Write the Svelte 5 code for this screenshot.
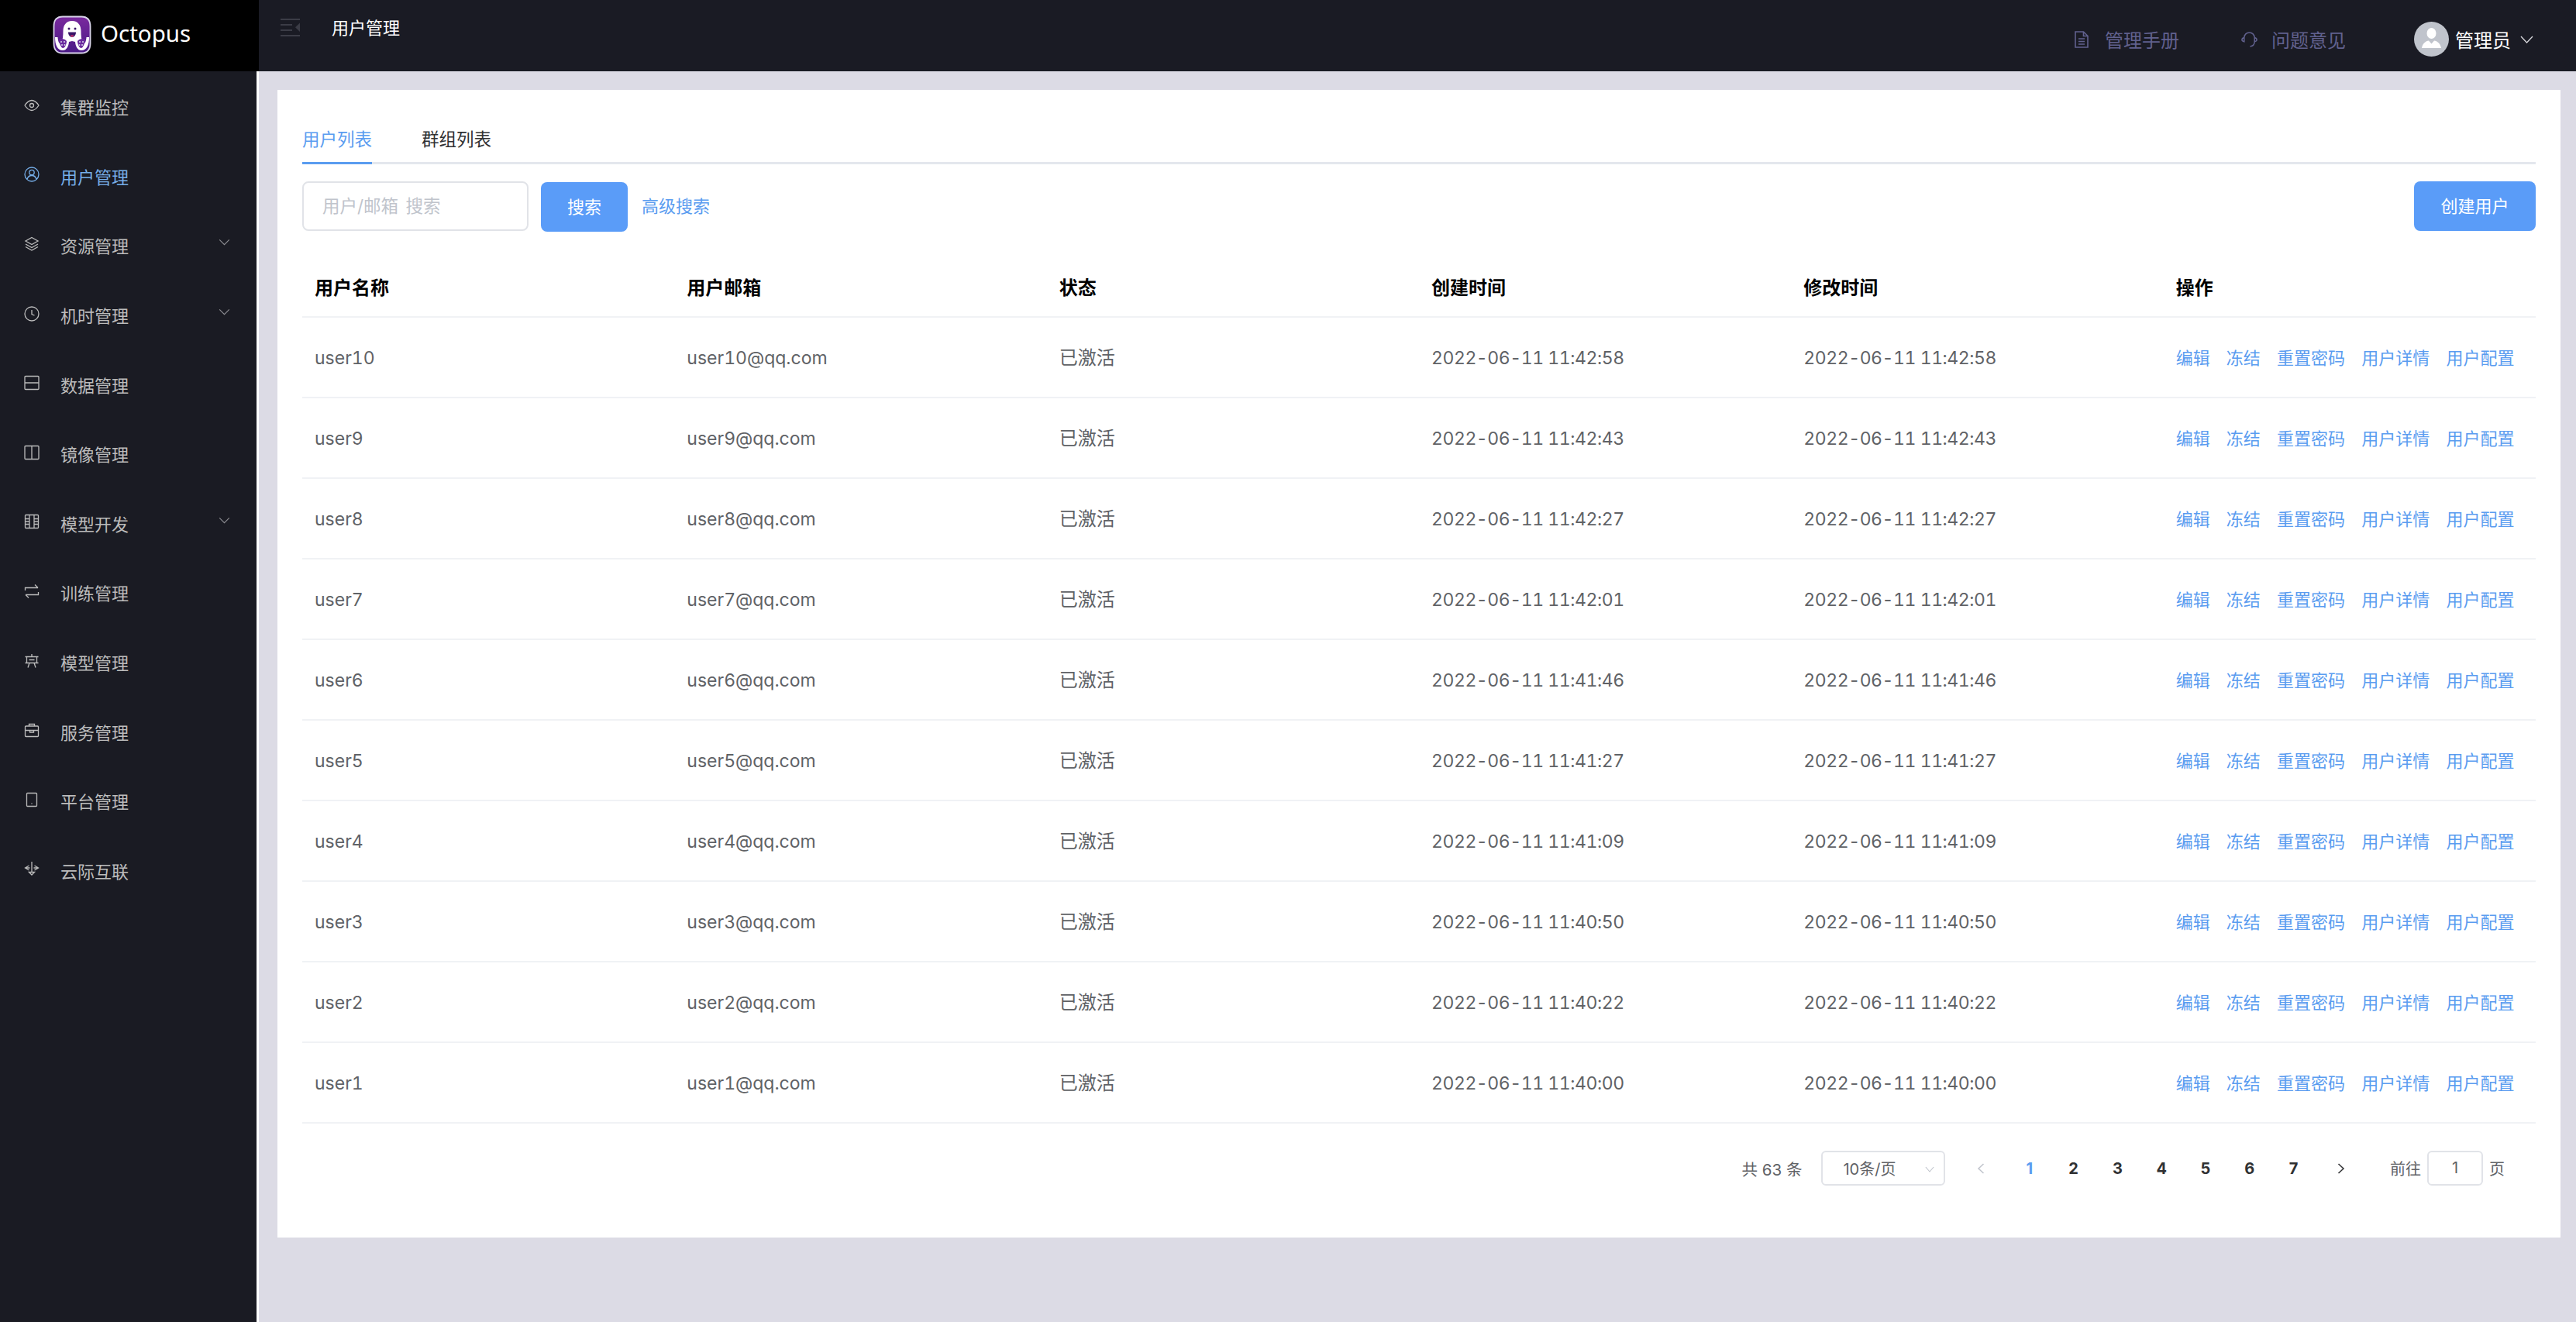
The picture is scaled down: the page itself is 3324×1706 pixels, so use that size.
<script>
  const menu = [
    { t: '集群监控', d: 'M1 10C4 5.5 7 3.5 10 3.5S16 5.5 19 10C16 14.5 13 16.5 10 16.5S4 14.5 1 10ZM12.5 10a2.5 2.5 0 1 1-5 0a2.5 2.5 0 1 1 5 0Z' },
    { t: '用户管理', active: true, d: 'M19 10a9 9 0 1 1-18 0a9 9 0 1 1 18 0ZM13.2 7.5a3.2 3.2 0 1 1-6.4 0a3.2 3.2 0 1 1 6.4 0ZM4 16.5c.8-3 3.3-5 6-5s5.200 2 6 5' },
    { t: '资源管理', arrow: true, d: 'M10 1.500 18 6l-8 4.500L2 6ZM2 10l8 4.500L18 10M2 13.500 10 18l8-4.500' },
    { t: '机时管理', arrow: true, d: 'M19 10a9 9 0 1 1-18 0a9 9 0 1 1 18 0ZM10 5v5.500l3.500 1.500' },
    { t: '数据管理', d: 'M2 1.500h16a1 1 0 0 1 1 1v15a1 1 0 0 1-1 1H2a1 1 0 0 1-1-1v-15a1 1 0 0 1 1-1ZM1 10h18' },
    { t: '镜像管理', d: 'M2 1.500h16a1 1 0 0 1 1 1v15a1 1 0 0 1-1 1H2a1 1 0 0 1-1-1v-15a1 1 0 0 1 1-1ZM10 1.500v17' },
    { t: '模型开发', arrow: true, d: 'M2.500 1.500h15a1 1 0 0 1 1 1v15a1 1 0 0 1-1 1h-15a1 1 0 0 1-1-1v-15a1 1 0 0 1 1-1ZM7 1.500v17M13 1.500v17M1.500 6.500H7M1.500 10H7M1.500 13.500H7M13 6.500h5.500M13 10h5.500M13 13.500h5.500' },
    { t: '训练管理', d: 'M1.500 9V5.500H18M14 1.500l4 4M18.500 11v3.500H2M6 18.500l-4-4' },
    { t: '模型管理', d: 'M1.500 4.500h17M3.500 4.500v8h13v-8M10 1v3.500M6.500 8.500h7M1.500 12.500h17M7 12.500 5 18.500M13 12.500l2 6' },
    { t: '服务管理', d: 'M2.500 5h15a1 1 0 0 1 1 1v11.500a1 1 0 0 1-1 1h-15a1 1 0 0 1-1-1V6a1 1 0 0 1 1-1ZM6.500 5V2.500h7V5M1.500 10.500h17M7.500 10.500v2.500h5v-2.500' },
    { t: '平台管理', d: 'M4.500 1.500h11a1 1 0 0 1 1 1v15a1 1 0 0 1-1 1h-11a1 1 0 0 1-1-1v-15a1 1 0 0 1 1-1ZM9.500 15h1' },
    { t: '云际互联', d: 'M10 1v14M6.500 6 1.500 9l5 3M13.500 6l5 3-5 3M1.500 9h6M12.500 9h6M6.500 14.500 10 18l3.500-3.500Z' }
  ];
  const users = [
    ['user10', '2022-06-11 11:42:58'],
    ['user9', '2022-06-11 11:42:43'],
    ['user8', '2022-06-11 11:42:27'],
    ['user7', '2022-06-11 11:42:01'],
    ['user6', '2022-06-11 11:41:46'],
    ['user5', '2022-06-11 11:41:27'],
    ['user4', '2022-06-11 11:41:09'],
    ['user3', '2022-06-11 11:40:50'],
    ['user2', '2022-06-11 11:40:22'],
    ['user1', '2022-06-11 11:40:00']
  ];
  const cols = ['用户名称', '用户邮箱', '状态', '创建时间', '修改时间', '操作'];
  const actions = ['编辑', '冻结', '重置密码', '用户详情', '用户配置'];
  const pages = [1, 2, 3, 4, 5, 6, 7];
</script>

<div class="app">
  <aside class="side">
    <div class="brand">
      <svg class="logo" viewBox="0 0 50 50" aria-hidden="true">
        <defs>
          <linearGradient id="lg" x1="0" y1="0" x2="0" y2="1">
            <stop offset="0" stop-color="#7a2a9e" />
            <stop offset="1" stop-color="#4a1a86" />
          </linearGradient>
        </defs>
        <path d="M13 1.500H37C45 1.500 48.500 6 48.500 14V36C48.500 44 45 48.500 37 48.500H13C5 48.500 1.500 44 1.500 36V14C1.500 6 5 1.500 13 1.500Z" fill="url(#lg)" stroke="#d9d4ea" stroke-width="1.800" />
        <path d="M25 7C33 7 36.500 13 36.500 20C36.500 26 37 31 38.500 34.500C40 38 43 36 43.500 28H47C47 38 44 45 37 45C32 45 29.500 40 29 34L25 33L21 34C20.500 40 18 45 13 45C6 45 3 38 3 28H6.500C7 36 10 38 11.500 34.500C13 31 13.500 26 13.500 20C13.500 13 17 7 25 7Z" fill="#fff" />
        <path d="M8 31C9 39 12 42 13 42C16 42 18 37 18 33C16 30 10 29 8 31ZM42 31C41 39 38 42 37 42C34 42 32 37 32 33C34 30 40 29 42 31Z" fill="#6a2a9e" />
        <circle cx="21" cy="17" r="1.500" fill="#3a1668" />
        <circle cx="29" cy="17" r="1.500" fill="#3a1668" />
        <path d="M20 21.500H30C30 25 28 28 25 28S20 25 20 21.500Z" fill="#3a1668" />
        <path d="M22.500 25.500H27.500L25 28Z" fill="#e03a6a" />
        <g fill="#d9d4ea">
          <circle cx="11" cy="34" r="1" /><circle cx="15" cy="34" r="1" /><circle cx="12" cy="38" r="1" /><circle cx="15.500" cy="38" r="1" />
          <circle cx="35" cy="34" r="1" /><circle cx="39" cy="34" r="1" /><circle cx="34.500" cy="38" r="1" /><circle cx="38" cy="38" r="1" />
        </g>
      </svg>
      <span class="brand-name">Octopus</span>
    </div>
    <nav class="menu">
      {#each menu as m}
        <div class="item" class:active={m.active}>
          <svg class="ico" viewBox="0 0 20 20" aria-hidden="true"><path d={m.d} /></svg>
          <span class="label">{m.t}</span>
          {#if m.arrow}
            <svg class="chev" viewBox="0 0 16 10" aria-hidden="true"><path d="M1 1.500 8 8.500 15 1.500" /></svg>
          {/if}
        </div>
      {/each}
    </nav>
  </aside>

  <div class="main">
    <header class="top">
      <svg class="burger" viewBox="0 0 25 23" aria-hidden="true">
        <path d="M0 1h25M0 8h15M0 15h15M0 22h25" />
        <path class="tri" d="M25 5.500V17l-6-5.750Z" />
      </svg>
      <div class="crumb">用户管理</div>
      <div class="spacer"></div>
      <div class="link">
        <svg class="link-ico" viewBox="0 0 18 22" aria-hidden="true"><path d="M1 1h10.500L17 6.500V21H1ZM11.500 1v5.500H17M5 10h8M5 13.500h8M5 17h8" /></svg>
        <span>管理手册</span>
      </div>
      <div class="link second">
        <svg class="link-ico head" viewBox="0 0 22 22" aria-hidden="true"><path d="M4 14V8.500a7 7 0 0 1 14 0V14M4 8.500C2 9 1 10 1 11.250S2 13.500 4 14ZM18 8.500c2 .5 3 1.500 3 2.750S20 13.500 18 14ZM18 14c0 3.500-2.500 6-6 6.500" /></svg>
        <span>问题意见</span>
      </div>
      <div class="avatar">
        <svg viewBox="0 0 45 45" aria-hidden="true">
          <circle cx="22.500" cy="22.500" r="22.500" fill="#c0c4cc" />
          <ellipse cx="22.500" cy="15" rx="6" ry="7" fill="#fff" />
          <path d="M10 34C11 28 15 25 19 24.500L22.500 28.500L26 24.500C30 25 34 28 35 34Z" fill="#fff" />
        </svg>
      </div>
      <span class="who">管理员</span>
      <svg class="who-chev" viewBox="0 0 17 10" aria-hidden="true"><path d="M1 1 8.500 9 16 1" /></svg>
    </header>

    <main class="content">
      <section class="card">
        <div class="tabs">
          <div class="tab on">用户列表</div>
          <div class="tab">群组列表</div>
        </div>
        <div class="tools">
          <div class="input"><span>用户/邮箱 搜索</span></div>
          <button class="btn search"><span>搜索</span></button>
          <span class="adv">高级搜索</span>
          <div class="spacer"></div>
          <button class="btn create"><span>创建用户</span></button>
        </div>
        <div class="table">
          <div class="row head-row">
            {#each cols as c}<div class="cell">{c}</div>{/each}
          </div>
          {#each users as u}
            <div class="row">
              <div class="cell">{u[0]}</div>
              <div class="cell">{u[0]}@qq.com</div>
              <div class="cell status">已激活</div>
              <div class="cell time">{u[1]}</div>
              <div class="cell time">{u[1]}</div>
              <div class="cell acts">
                {#each actions as a}<span>{a}</span>{/each}
              </div>
            </div>
          {/each}
        </div>
        <div class="pager">
          <span class="total">共 63 条</span>
          <div class="select">
            <span>10条/页</span>
            <svg class="sel-chev" viewBox="0 0 14 9" aria-hidden="true"><path d="M1 1 7 8 13 1" /></svg>
          </div>
          <div class="nav prev"><svg viewBox="0 0 10 14" aria-hidden="true"><path d="M8.500 1 2 7 8.500 13" /></svg></div>
          {#each pages as p}
            <div class="num" class:cur={p === 1}>{p}</div>
          {/each}
          <div class="nav next"><svg viewBox="0 0 10 14" aria-hidden="true"><path d="M1.500 1 8 7 1.500 13" /></svg></div>
          <span class="goto">前往</span>
          <div class="jump">1</div>
          <span class="unit">页</span>
        </div>
      </section>
    </main>
  </div>
</div>

<style>
  :global(body) {
    margin: 0;
    background: #dcdbe5;
  }
  .app {
    display: flex;
    width: 3324px;
    height: 1706px;
    overflow: hidden;
    font-family: Inter, "Noto Sans CJK SC", sans-serif;
    font-size: 22px;
    color: #606266;
    background: #dcdbe5;
  }
  .side {
    width: 334px;
    flex: none;
    display: flex;
    flex-direction: column;
    background: #fff;
  }
  .brand {
    height: 92px;
    background: #000;
    display: flex;
    align-items: center;
    padding-left: 68px;
    gap: 12px;
    flex: none;
  }
  .logo {
    width: 50px;
    height: 50px;
    margin-top: -3px;
  }
  .brand-name {
    font-family: "Noto Sans", sans-serif;
    font-size: 29.5px;
    color: #fff;
    margin-top: -7px;
  }
  .menu {
    flex: 1;
    width: 331px;
    background: #1a1b23;
    box-sizing: border-box;
    font-family: "Noto Sans CJK SC", sans-serif;
  }
  .item {
    height: 89.6px;
    display: flex;
    align-items: center;
    padding-left: 31px;
    color: #bcbcbc;
    position: relative;
  }
  .item.active {
    color: #76aee8;
  }
  .ico {
    width: 20px;
    height: 20px;
    margin-right: 27px;
    margin-top: -2px;
    fill: none;
    stroke: currentColor;
    stroke-width: 1.300;
  }
  .label {
    line-height: 30px;
    margin-top: 1px;
  }
  .chev {
    position: absolute;
    left: 282px;
    top: 37px;
    width: 15px;
    height: 9px;
    fill: none;
    stroke: #8d8d92;
    stroke-width: 1.300;
  }
  .main {
    flex: 1;
    min-width: 0;
    display: flex;
    flex-direction: column;
  }
  .top {
    height: 92px;
    flex: none;
    background: #1a1b24;
    display: flex;
    align-items: center;
    padding-left: 28px;
    padding-right: 55px;
    font-family: "Noto Sans CJK SC", sans-serif;
  }
  .burger {
    width: 25px;
    height: 23px;
    margin-top: -22px;
    fill: none;
    stroke: #3b3c46;
    stroke-width: 2;
  }
  .tri {
    fill: #3b3c46;
    stroke: none;
  }
  .crumb {
    margin-left: 41px;
    margin-top: -24px;
    color: #fff;
  }
  .spacer {
    flex: 1;
  }
  .link {
    display: flex;
    align-items: center;
    color: #61618e;
    font-size: 24px;
    margin-right: 80px;
    margin-top: 9px;
  }
  .second {
    margin-right: 88px;
  }
  .link-ico {
    width: 18px;
    height: 22px;
    margin-right: 21px;
    fill: none;
    stroke: #61618e;
    stroke-width: 1.600;
  }
  .link-ico.head {
    width: 21px;
    margin-right: 18px;
  }
  .avatar {
    width: 45px;
    height: 45px;
    margin-top: 9px;
    margin-right: 8px;
  }
  .avatar svg {
    display: block;
    width: 45px;
    height: 45px;
  }
  .who {
    color: #fff;
    font-size: 24px;
    margin-top: 9px;
  }
  .who-chev {
    width: 17px;
    height: 10px;
    margin-left: 12px;
    margin-top: 10px;
    fill: none;
    stroke: #d8d8dc;
    stroke-width: 1.300;
  }
  .content {
    flex: 1;
    padding: 24px 20px 0 24px;
  }
  .card {
    height: 1481px;
    box-sizing: border-box;
    background: #fff;
    padding: 0 32px;
  }
  .tabs {
    height: 96px;
    box-sizing: border-box;
    border-bottom: 3px solid #e4e7ed;
    display: flex;
    align-items: flex-end;
    gap: 64px;
    font-size: 22.5px;
  }
  .tab {
    height: 50px;
    line-height: 36px;
    box-sizing: border-box;
    color: #303133;
    margin-bottom: -3px;
    border-bottom: 3px solid transparent;
  }
  .tab.on {
    color: #5a9cf0;
    border-bottom-color: #5a9cf0;
  }
  .tools {
    display: flex;
    align-items: center;
    margin-top: 22px;
    height: 65px;
  }
  .input {
    width: 292px;
    height: 64px;
    box-sizing: border-box;
    border: 2px solid #e1e3e8;
    border-radius: 8px;
    display: flex;
    align-items: center;
    padding: 0 0 5px 24px;
    color: #c0c4cc;
    margin-top: -1px;
    font-size: 22.5px;
    word-spacing: 3px;
  }
  .btn {
    height: 64px;
    border: 0;
    border-radius: 8px;
    background: #5a9cf8;
    color: #fff;
    font: inherit;
    padding: 0 0 5px;
  }
  .search {
    width: 112px;
    margin-left: 16px;
    margin-top: 1px;
  }
  .create {
    width: 157px;
    margin-top: -1px;
  }
  .adv {
    margin-left: 18px;
    margin-bottom: 5px;
    color: #5a9cf0;
  }
  .table {
    margin-top: 35px;
    font-size: 23px;
    font-variant-numeric: tabular-nums;
  }
  .row {
    display: grid;
    grid-template-columns: repeat(6, 1fr);
    height: 104px;
    align-items: center;
    border-bottom: 2px solid #f0f2f5;
    box-sizing: border-box;
  }
  .head-row {
    height: 76px;
    color: #000;
    font-size: 24px;
    font-weight: 600;
  }
  .cell {
    padding-left: 16px;
    padding-top: 3px;
    white-space: nowrap;
    line-height: 1.2;
  }
  .head-row .cell {
    padding-top: 2px;
  }
  .status {
    font-size: 24px;
  }
  .time {
    letter-spacing: -0.45px;
  }
  .acts {
    display: flex;
    gap: 21.2px;
    color: #5a9cf0;
    padding-left: 16px;
    padding-top: 2px;
    font-size: 22px;
  }
  .pager {
    display: flex;
    align-items: center;
    justify-content: flex-end;
    margin-top: 35px;
    height: 45px;
    padding-right: 40px;
    font-size: 20px;
  }
  .total {
    margin-right: 25px;
    font-size: 20.5px;
  }
  .select {
    width: 160px;
    height: 45px;
    box-sizing: border-box;
    border: 2px solid #e1e3e8;
    border-radius: 6px;
    display: flex;
    align-items: center;
    padding-left: 26px;
    position: relative;
  }
  .sel-chev {
    position: absolute;
    right: 12px;
    top: 18px;
    width: 12px;
    height: 8px;
    fill: none;
    stroke: #c0c4cc;
    stroke-width: 1.300;
  }
  .nav {
    width: 60px;
    display: flex;
    align-items: center;
    justify-content: center;
    margin-left: 16px;
  }
  .nav svg {
    width: 10px;
    height: 14px;
    fill: none;
    stroke: #303133;
    stroke-width: 1.500;
  }
  .prev svg {
    stroke: #c0c4cc;
  }
  .next {
    width: 66px;
    margin-left: 0;
  }
  .num {
    width: 56.8px;
    text-align: center;
    font-weight: 700;
    color: #303133;
  }
  .prev + .num {
    margin-left: 4px;
  }
  .num.cur {
    color: #5a9cf0;
  }
  .goto {
    margin-left: 30px;
    margin-right: 8px;
  }
  .jump {
    width: 72px;
    height: 45px;
    box-sizing: border-box;
    border: 2px solid #e1e3e8;
    border-radius: 6px;
    text-align: center;
    line-height: 41px;
    margin-right: 8px;
  }
</style>
